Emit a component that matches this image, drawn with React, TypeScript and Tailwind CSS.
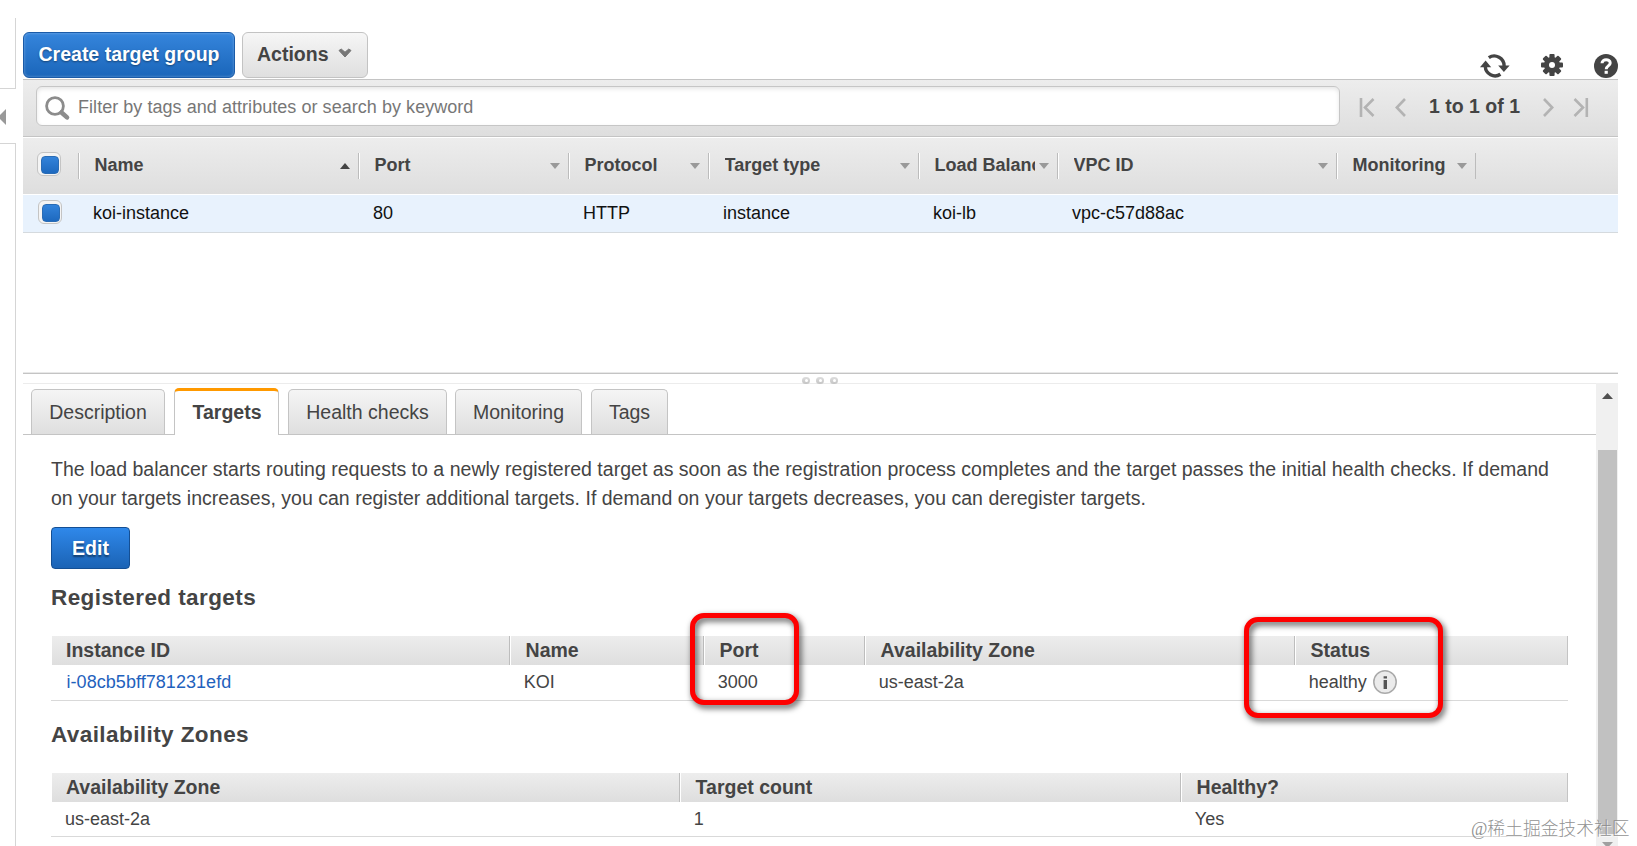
import React from "react";

const HEAD_GRADIENT = "bg-linear-to-b from-[#ededed] to-[#dedede]";

const gridColumns = [
  { label: "Name", value: "koi-instance", width: "w-[280px]", sort: "up" },
  { label: "Port", value: "80", width: "w-[210px]", sort: "down" },
  { label: "Protocol", value: "HTTP", width: "w-[140px]", sort: "down" },
  { label: "Target type", value: "instance", width: "w-[210px]", sort: "down" },
  { label: "Load Balancer", value: "koi-lb", width: "w-[139px]", sort: "down" },
  { label: "VPC ID", value: "vpc-c57d88ac", width: "w-[279px]", sort: "down" },
  { label: "Monitoring", value: "", width: "w-[139px]", sort: "down" },
];

const tabs = ["Description", "Targets", "Health checks", "Monitoring", "Tags"];

const targetColumns = [
  { label: "Instance ID", value: "i-08cb5bff781231efd", width: "w-[458px]" },
  { label: "Name", value: "KOI", width: "w-[194px]" },
  { label: "Port", value: "3000", width: "w-[161px]" },
  { label: "Availability Zone", value: "us-east-2a", width: "w-[430px]" },
  { label: "Status", value: "healthy", width: "w-[273px]" },
];

const zoneColumns = [
  { label: "Availability Zone", value: "us-east-2a", width: "w-[628px]" },
  { label: "Target count", value: "1", width: "w-[501px]" },
  { label: "Healthy?", value: "Yes", width: "w-[387px]" },
];

function Checkbox({ className }: { className: string }) {
  return (
    <span className={`flex size-6 items-center justify-center rounded-[6px] border border-[#c4c4c4] bg-[#f4f4f4] pt-0.5 pl-0.5 ${className}`}>
      <span className="size-[18px] rounded-[4px] border border-[#2a6cb5] bg-linear-to-b from-[#3383da] to-[#1d69bf]" />
    </span>
  );
}

function RefreshIcon() {
  return (
    <svg width="30" height="26" viewBox="0 0 30 26" fill="none" stroke="#444" strokeWidth="3.4">
      <path d="M8.8 4.7A9.8 9.8 0 0 1 24.1 13" />
      <path d="M20.4 21.3A9.8 9.8 0 0 1 5.3 13.5" />
      <path d="M18.2 12.4H29.6L23.9 18.9Z" fill="#444" stroke="none" />
      <path d="M0 14.2H11.2L5.6 7.6Z" fill="#444" stroke="none" />
    </svg>
  );
}

function GearIcon() {
  return (
    <svg width="22" height="22" viewBox="-11 -11 22 22" fill="#444">
      {[0, 45, 90, 135].map((a) => (
        <rect key={a} x="-2.6" y="-11" width="5.2" height="22" rx="1" transform={`rotate(${a})`} />
      ))}
      <circle r="8" />
      <circle r="3" fill="#fff" />
    </svg>
  );
}

function HelpIcon() {
  return (
    <svg width="24" height="24" viewBox="0 0 24 24">
      <circle cx="12" cy="12" r="12" fill="#444" />
      <path d="M8 9.2C8 4.6 16.2 4.6 16.2 9C16.2 12 12.2 11.8 12.2 15.2" fill="none" stroke="#fff" strokeWidth="3" />
      <rect x="10.6" y="16.8" width="3.2" height="3" fill="#fff" />
    </svg>
  );
}

function SearchIcon() {
  return (
    <svg width="26" height="25" viewBox="0 0 26 25" fill="none" stroke="#8c8c8c">
      <circle cx="10" cy="10" r="8.4" strokeWidth="2.8" />
      <path d="M16.5 16.5L22 21.4" strokeWidth="4.6" strokeLinecap="round" />
    </svg>
  );
}

function Pager() {
  return (
    <div className="flex items-center pt-0.5">
      <svg className="ml-[19px]" width="16" height="19" viewBox="0 0 16 19" fill="none" stroke="#b3b3b3" strokeWidth="2.6">
        <path d="M2 0V19M14.5 1L6 9.5L14.5 18" />
      </svg>
      <svg className="ml-5" width="11" height="19" viewBox="0 0 11 19" fill="none" stroke="#b3b3b3" strokeWidth="2.6">
        <path d="M10 1L1.8 9.5L10 18" />
      </svg>
      <span className="ml-[23px] w-[92px] text-[19.5px] font-bold whitespace-nowrap">1 to 1 of 1</span>
      <svg className="ml-[22px]" width="11" height="19" viewBox="0 0 11 19" fill="none" stroke="#b3b3b3" strokeWidth="2.6">
        <path d="M1 1L9.2 9.5L1 18" />
      </svg>
      <svg className="ml-[19px]" width="16" height="19" viewBox="0 0 16 19" fill="none" stroke="#b3b3b3" strokeWidth="2.6">
        <path d="M13.8 0V19M1.5 1L10 9.5L1.5 18" />
      </svg>
    </div>
  );
}

function InfoIcon() {
  return (
    <svg className="ml-1.5" width="24" height="24" viewBox="0 0 24 24">
      <circle cx="12" cy="12" r="11.2" fill="#ebebeb" stroke="#a9a9a9" strokeWidth="1.5" />
      <path d="M10.6 6.2H14V8.4H10.6ZM10.6 10H14V19H10.6Z" fill="#555" />
    </svg>
  );
}

function DetailTable({ columns, rowClass }: { columns: { label: string; value: string; width: string }[]; rowClass: string }) {
  return (
    <div className="w-[1517px]">
      <div className={`ml-px flex h-[29px] border-r border-[#c4c4c4] ${HEAD_GRADIENT}`}>
        {columns.map((c, i) => (
          <div
            key={c.label}
            className={`flex shrink-0 items-center text-[19.5px] leading-[29px] font-bold ${c.width} ${i ? "border-l border-white pl-[14.6px] shadow-[-1px_0_0_#bdbdbd]" : "pl-3.5"}`}
          >
            {c.label}
          </div>
        ))}
      </div>
      <div className={`flex border-b border-[#d9d9d9] pl-px text-[18px] ${rowClass}`}>
        {columns.map((c, i) => (
          <div key={c.label} className={`flex h-[34px] shrink-0 items-center ${i ? "pl-[13.8px]" : "pl-[13px]"} ${c.width}`}>
            {c.label === "Instance ID" ? <a className="pl-[1.5px] tracking-[0.05px] text-[#1f62bd]">{c.value}</a> : c.value}
            {c.label === "Status" && <InfoIcon />}
          </div>
        ))}
      </div>
    </div>
  );
}

export default function App() {
  return (
    <div className="relative flex h-[846px] w-[1637px] overflow-hidden bg-white font-['Liberation_Sans',Arial,sans-serif] text-[#444]">
      <aside className="flex w-4 shrink-0 flex-col pt-[18px]">
        <div className="h-[71px] border-r border-b border-[#d5d5d5]" />
        <div className="flex h-[54px] items-center pt-px">
          <svg width="6" height="16" viewBox="0 0 6 16">
            <path d="M6 0V16L-2 8Z" fill="#999" />
          </svg>
        </div>
        <div className="flex-1 border-t border-r border-[#d5d5d5]" />
      </aside>

      <main className="ml-[7px] flex w-[1595px] shrink-0 flex-col">
        <div className="flex h-[79px] shrink-0 pt-8">
          <button className="flex h-[46px] w-[212px] items-center justify-center rounded-[6px] border border-[#1a5ba8] bg-linear-to-b from-[#3585dc] to-[#1a66ba] pb-px text-[19.5px] font-bold whitespace-nowrap text-white shadow-[inset_0_0_3px_rgba(255,255,255,0.35)] [text-shadow:0_1px_2px_rgba(0,0,0,0.4)]">
            Create target group
          </button>
          <button className="ml-[7px] flex h-[46px] w-[126px] items-center rounded-[6px] border border-[#c3c3c3] bg-linear-to-b from-[#f6f6f6] to-[#dfdfdf] pb-px pl-3.5 text-[19.5px] font-bold">
            Actions
            <svg className="mt-[-4px] ml-[9px]" width="14" height="10" viewBox="0 0 14 10">
              <path d="M1 2.5L3.2 1L7 4.2L10.8 1L13 2.5L7 9Z" fill="#777" stroke="#777" strokeLinejoin="round" />
            </svg>
          </button>
          <div className="mt-[21px] ml-auto flex h-[26px] items-center">
            <RefreshIcon />
            <span className="ml-[31px] flex pb-0.5"><GearIcon /></span>
            <span className="ml-[31px] flex pr-[0.5px]"><HelpIcon /></span>
          </div>
        </div>

        <div className="flex h-[58px] shrink-0 items-start border-t border-b border-[#c4c4c4] bg-linear-to-b from-[#ededed] to-[#dedede] pt-1.5 pl-[13px]">
          <div className="flex h-10 w-[1304px] items-center rounded-[6px] border border-[#c6c6c6] bg-white pl-2 text-[18px] text-[#777] shadow-[inset_0_2px_4px_rgba(0,0,0,0.1)]">
            <span className="mt-1 flex"><SearchIcon /></span>
            <span className="ml-[7px] pt-0.5 tracking-[0.045px]">Filter by tags and attributes or search by keyword</span>
          </div>
          <div className="flex h-10 items-center"><Pager /></div>
        </div>

        <div className={`flex h-[58px] shrink-0 border-t border-b border-white ${HEAD_GRADIENT}`}>
          <div className="w-[55px] pt-[14px] pl-3.5"><Checkbox className="" /></div>
          {gridColumns.map((c) => (
            <div key={c.label} className={`mt-[15px] flex h-[26px] items-center border-l border-[#bcbcbc] pl-[15.6px] shadow-[inset_1px_0_0_#fff,1px_0_0_#bcbcbc] ${c.width}`}>
              <span className="flex-1 overflow-hidden pb-0.5 text-[18px] leading-[24px] font-bold whitespace-nowrap">{c.label}</span>
              <svg className="mr-2 ml-1 shrink-0" width="10" height="6" viewBox="0 0 10 6">
                {c.sort === "up" ? <path d="M0 6L5 0L10 6Z" fill="#444" /> : <path d="M0 0H10L5 6Z" fill="#999" />}
              </svg>
            </div>
          ))}
        </div>
        <div className="flex h-[38px] shrink-0 items-center border-b border-[#d5dade] bg-[#e8f2fd] text-[18px] text-[#111]">
          <div className="w-[55px] pl-[15px]"><Checkbox className="-mt-[3px]" /></div>
          {gridColumns.map((c) => (
            <div key={c.label} className={`pl-[15px] ${c.width}`}>{c.value}</div>
          ))}
        </div>

        <div className="h-[140px] shrink-0" />
        <div className="flex h-[11px] shrink-0 items-end justify-center gap-[6px] border-t border-b border-t-[#c4c4c4] border-b-[#ececec] pr-px shadow-[0_-1px_0_#e8e8e8]">
          {[0, 1, 2].map((n) => (
            <span key={n} className="-mb-px flex h-[7px] w-2 justify-center rounded-full bg-linear-to-b from-[#dedede] to-[#c4c4c4] pt-0.5">
              <span className="size-[3px] rounded-full bg-white" />
            </span>
          ))}
        </div>

        <div className="flex min-h-0 flex-1">
          <div className="w-[1573px] shrink-0">
            <div className="flex h-[51px] items-end border-b border-[#c4c4c4] pl-2">
              {tabs.map((t) =>
                t === "Targets" ? (
                  <div key={t} className="-mb-px ml-[9px] flex h-[47px] w-[105px] items-center justify-center rounded-t-[5px] border-x border-t-3 border-x-[#c4c4c4] border-t-[#ff9900] bg-white pl-px text-[19.5px] font-bold">
                    {t}
                  </div>
                ) : (
                  <div
                    key={t}
                    className={`flex h-[45px] items-center justify-center rounded-t-[5px] border border-b-0 border-[#c4c4c4] bg-linear-to-b from-[#f5f5f5] to-[#dfdfdf] pt-0.5 text-[19.5px] whitespace-nowrap ${
                      t === "Description" ? "w-[134px]" : t === "Health checks" ? "ml-[9px] w-[159px]" : t === "Monitoring" ? "ml-2 w-[127px]" : "ml-[9px] w-[77px]"
                    }`}
                  >
                    {t}
                  </div>
                )
              )}
            </div>
            <div className="pt-5 pl-7">
              <p className="text-[19.5px] leading-[29.25px] tracking-[0.018px] whitespace-nowrap">
                The load balancer starts routing requests to a newly registered target as soon as the registration process completes and the target passes the initial health checks. If demand
                <br />
                on your targets increases, you can register additional targets. If demand on your targets decreases, you can deregister targets.
              </p>
              <button className="mt-[13.5px] flex h-[42px] w-[79px] items-center justify-center rounded-[4px] border border-[#144f94] bg-linear-to-b from-[#2f88ea] to-[#1b63b5] pt-0.5 text-[19.5px] font-bold text-white [text-shadow:0_2px_2px_rgba(0,0,0,0.45)]">
                Edit
              </button>
              <h2 className="mt-[15px] h-[52px] text-[22.5px] leading-[28px] font-bold tracking-[0.42px]">Registered targets</h2>
              <DetailTable columns={targetColumns} rowClass="h-9" />
              <h2 className="mt-5 h-[52px] text-[22.5px] leading-[28px] font-bold tracking-[0.42px]">Availability Zones</h2>
              <DetailTable columns={zoneColumns} rowClass="h-[35px]" />
            </div>
          </div>
          <div className="-mt-px flex w-[22px] shrink-0 flex-col items-center bg-[#f0f0f0] pt-[10px]">
            <svg width="11" height="6" viewBox="0 0 11 6" className="shrink-0">
              <path d="M0 6L5.5 0L11 6Z" fill="#505050" />
            </svg>
            <div className="mt-[51px] h-[384px] w-[19px] shrink-0 bg-[#c1c1c1]" />
            <svg width="11" height="6" viewBox="0 0 11 6" className="mt-2 shrink-0">
              <path d="M0 0H11L5.5 6Z" fill="#a0a0a0" />
            </svg>
          </div>
        </div>
      </main>

      <div className="absolute top-[613px] left-[690px] h-[92px] w-[109px] rounded-[14px] border-5 border-[#fe0000] [filter:drop-shadow(2px_3px_3px_rgba(0,0,0,0.7))]" />
      <div className="absolute top-[617px] left-[1244px] h-[101px] w-[199px] rounded-[14px] border-5 border-[#fe0000] [filter:drop-shadow(2px_3px_3px_rgba(0,0,0,0.7))]" />
      <div className="absolute top-[816px] left-[1471px] font-['Liberation_Serif','Noto_Sans_CJK_SC',serif] text-[17.8px] leading-[26px] font-light whitespace-nowrap text-[#858585]/90 [text-shadow:1px_1px_0_rgba(255,255,255,0.7)]">
        @稀土掘金技术社区
      </div>
    </div>
  );
}
